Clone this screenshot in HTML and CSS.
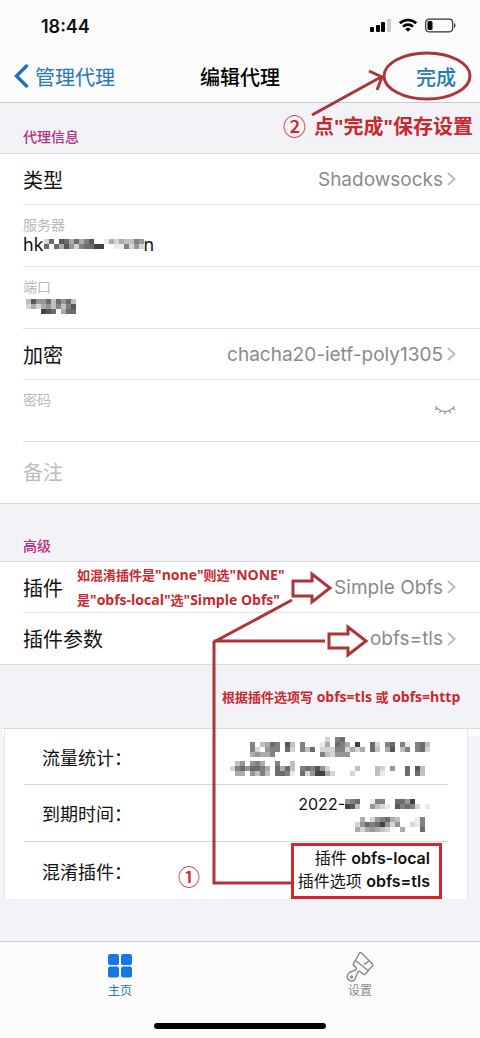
FILE: index.html
```html
<!DOCTYPE html>
<html lang="zh-CN">
<head>
<meta charset="utf-8">
<meta name="viewport" content="width=device-width, initial-scale=1">
<title>编辑代理</title>
<link rel="stylesheet" href="styles.css">
</head>
<body>
<div class="app">
  <header class="top">
    <div class="status">
      <span class="clock">18:44</span>
      <svg class="status-icons" width="86" height="16" viewBox="0 0 86 16" aria-hidden="true">
        <rect x="0" y="9" width="4" height="5" rx="1"/>
        <rect x="6" y="7" width="4" height="7" rx="1"/>
        <rect x="11" y="4" width="4" height="10" rx="1"/>
        <rect x="17" y="1" width="4" height="13" rx="1" fill="#ccc"/>
        <g fill="none" stroke="#000" stroke-width="2.6">
          <path d="M29.800 5.200A12 12 0 0 1 46.200 5.200"/>
          <path d="M33 8.600A7.300 7.300 0 0 1 43 8.600"/>
        </g>
        <path d="M35.200 11A4.200 4.200 0 0 1 40.800 11L38 13.800Z"/>
        <rect x="55.700" y="1.200" width="27" height="12.600" rx="3.500" fill="none" stroke="#333" stroke-width="1.200"/>
        <rect x="57.500" y="3" width="5" height="9" rx="1.500"/>
        <path d="M84 5v5c2-.8 2-4.200 0-5z" fill="#444"/>
      </svg>
    </div>
    <nav class="nav">
      <button class="link back" type="button">
        <svg width="15" height="24" viewBox="0 0 15 24" aria-hidden="true"><path d="M12.500 2L2.500 12l10 10" fill="none" stroke="#2272b9" stroke-width="3.400" stroke-linecap="round"/></svg>
        <span>管理代理</span>
      </button>
      <h1 class="title">编辑代理</h1>
      <button class="link done" type="button">完成</button>
    </nav>
  </header>

  <main class="content">
    <h2 class="section">代理信息</h2>
    <form class="group">
      <button class="row" type="button"><span>类型</span><span class="value">Shadowsocks<svg class="chev" width="9" height="16" viewBox="0 0 9 16"><path d="M1 2l6.500 6L1 14"/></svg></span></button>
      <div class="row field"><span class="hint">服务器</span><span class="entry">hk<svg class="mosaic" data-cells="27.8747468..14243365/7.7485267799..116252"></svg>n</span></div>
      <div class="row field"><span class="hint">端口</span><span class="entry"><svg class="mosaic port" data-cells="3855737573/2424536368/...987.477"></svg></span></div>
      <button class="row" type="button"><span>加密</span><span class="value">chacha20-ietf-poly1305<svg class="chev" width="9" height="16" viewBox="0 0 9 16"><path d="M1 2l6.500 6L1 14"/></svg></span></button>
      <div class="row field secret">
        <label class="hint" for="pw">密码</label>
        <input id="pw" class="input" type="password">
        <button class="eye" type="button" aria-label="显示密码"><svg width="22" height="12" viewBox="0 0 24 12"><path d="M1.500 2Q12 13.500 22.500 2M3.500 4L1 6M7.500 6.500L6 9M12 8v3M16.500 6.500L18 9M20.500 4L23 6" fill="none" stroke="#8a94a6" stroke-width="1.300"/></svg></button>
      </div>
      <div class="row note"><input class="input" type="text" placeholder="备注" aria-label="备注"></div>
    </form>

    <h2 class="section advanced">高级</h2>
    <div class="group">
      <button class="row" type="button"><span>插件</span><span class="value">Simple Obfs<svg class="chev" width="9" height="16" viewBox="0 0 9 16"><path d="M1 2l6.500 6L1 14"/></svg></span></button>
      <button class="row" type="button"><span>插件参数</span><span class="value">obfs=tls<svg class="chev" width="9" height="16" viewBox="0 0 9 16"><path d="M1 2l6.500 6L1 14"/></svg></span></button>
    </div>

    <div class="card-wrap">
      <dl class="card">
        <div class="item"><dt>流量统计：</dt><dd>
          <svg class="mosaic" data-cells="...............2.67................./6.3476.83.6...14.764.9..72.67.61.673/62.566.72.637.222662424.73.48.36.672/45446.........632555................"></svg>
          <svg class="mosaic" data-cells=".35.564..6..3.........................../26757764.7473.676852.....3...32.5..7.83./.44.5363.7761.7259942...2....31....7.73."></svg>
        </dd></div>
        <div class="item"><dt>到期时间：</dt><dd>
          <span class="date">2022-<svg class="mosaic" data-cells="567..166..7759.../983..5321.86762.1"></svg></span>
          <svg class="mosaic" data-cells=".4.256743...16./257679525..216./4245432..4...7."></svg>
        </dd></div>
        <div class="item"><dt>混淆插件：</dt><dd class="boxed"><span>插件 <b>obfs-local</b></span><span>插件选项 <b>obfs=tls</b></span></dd></div>
      </dl>
    </div>
  </main>

  <footer class="tabs">
    <div class="tab-row">
      <a class="tab active" href="#home">
        <svg width="28" height="28" viewBox="0 0 28 28" fill="#1677e5" aria-hidden="true"><rect x="2" y="3" width="11" height="11" rx="2"/><rect x="15" y="3" width="11" height="11" rx="2"/><rect x="2" y="15.500" width="11" height="11" rx="2"/><rect x="15" y="15.500" width="11" height="11" rx="2"/></svg>
        <span>主页</span>
      </a>
      <a class="tab" href="#settings">
        <svg width="28" height="32" viewBox="0 0 28 32" fill="none" stroke="#8b8b8b" stroke-width="1.500" stroke-linejoin="round" stroke-linecap="round" aria-hidden="true"><path d="M13.500 2Q14.500 1 15.500 2L26.500 13Q27 14 26.500 15L22 19.500 9.500 9.500zM9 10L7.500 12.500Q7 13.500 8 14.500L10 16.500Q11 18 9.500 19L3.500 21.500Q.5 23.500 1.500 27 3 30.500 6.500 30 9 29.500 9.500 26.500L12 21Q13 19.500 14.500 21L17 23Q18.500 24 19.500 23L22 20M18.500 13Q21.500 12 22.500 10"/><circle cx="5.500" cy="26" r="1"/></svg>
        <span>设置</span>
      </a>
    </div>
    <div class="home-bar"></div>
  </footer>

  <svg class="notes" width="480" height="1038" viewBox="0 0 480 1038">
    <g class="ink">
      <ellipse cx="427" cy="76" rx="43" ry="23"/>
      <path d="M312 115L381 77M369 71L382 77 377 90"/>
      <path d="M291 883H214V642L292 600M214 641H325"/>
      <path d="M293 581H312V574L330 588 312 602V596H293Z"/>
      <path d="M329 634H348V627L366 641 348 655V648H329Z"/>
    </g>
    <g class="note-text">
      <text class="big" x="314" y="134">点"完成"保存设置</text>
      <text class="num" x="283" y="135">②</text>
      <text class="num one" x="178" y="885">①</text>
      <text x="77" y="580">如混淆插件是<tspan class="latin">"none"</tspan>则选<tspan class="latin">"NONE"</tspan></text>
      <text x="77" y="605">是<tspan class="latin">"obfs-local"</tspan>选<tspan class="latin">"Simple Obfs"</tspan></text>
      <text x="222" y="702">根据插件选项写<tspan class="latin"> obfs=tls </tspan>或<tspan class="latin"> obfs=http</tspan></text>
    </g>
  </svg>
</div>
<script src="mosaic.js"></script>
</body>
</html>
```
FILE: styles.css
```css
* { box-sizing: border-box; }
body {
  margin: 0;
  background: #f2f2f7;
  font-family: Inter, "Noto Sans CJK SC", sans-serif;
  color: #111;
}
button, input {
  font: inherit;
  color: inherit;
  background: none;
  border: 0;
  padding: 0;
  margin: 0;
}
.app {
  position: relative;
  min-height: 100vh;
  display: flex;
  flex-direction: column;
  overflow: hidden;
}
.top {
  background: #fbfbfc;
  border-bottom: 1px solid #c9c9cd;
}
.status {
  height: 50px;
  padding: 2px 24px 0 41px;
  display: flex;
  align-items: center;
  justify-content: space-between;
}
.clock { font-size: 18px; font-weight: 600; }
.nav {
  height: 52px;
  padding: 0 14px;
  display: grid;
  grid-template-columns: 1fr auto 1fr;
  align-items: center;
  font-size: 20px;
}
.title { margin: 0; font-size: 20px; font-weight: 500; color: #000; }
.link { color: #2678b8; }
.back { display: flex; align-items: center; gap: 6px; }
.done { justify-self: end; margin-right: 10px; font-weight: 500; }

.content { flex: 1; }
.section {
  margin: 0;
  height: 50px;
  padding: 24px 23px 0;
  font-size: 14px;
  line-height: 20px;
  font-weight: 500;
  color: #b52f83;
}
.section.advanced { height: 57px; padding-top: 32px; }
.group {
  background: #fff;
  border-top: 1px solid #dcdce0;
  border-bottom: 1px solid #dcdce0;
  padding-left: 23px;
}
.row {
  width: 100%;
  height: 51px;
  padding-right: 24px;
  display: flex;
  align-items: center;
  justify-content: space-between;
  font-size: 20px;
  text-align: left;
  border-bottom: 1px solid #e0e0e2;
}
.row:last-child { border-bottom: 0; }
.value {
  display: flex;
  align-items: center;
  gap: 4px;
  font-size: 19px;
  color: #8a8a8d;
}
.chev { fill: none; stroke: #bcbcc0; stroke-width: 2; }
.field {
  height: 62px;
  padding-top: 11px;
  flex-direction: column;
  align-items: flex-start;
  justify-content: flex-start;
}
.hint { font-size: 14px; line-height: 18px; color: #b9b9bc; }
.entry {
  display: flex;
  align-items: center;
  height: 20px;
  font-size: 18px;
}
.mosaic { display: block; }
.port { margin-left: 3px; }
.secret {
  display: grid;
  grid-template-columns: 1fr auto;
  grid-template-rows: 18px 20px;
}
.secret .input { grid-row: 2; height: 20px; }
.eye { grid-column: 2; grid-row: 1 / 3; align-self: center; line-height: 0; }
.note { height: 61px; }
.input { width: 100%; outline: 0; }
.input::placeholder { color: #bcbcbf; opacity: 1; }

.card-wrap {
  margin: 63px 0 0 2px;
  padding: 0 12px 0 2px;
  border-top: 1px solid #dcdce0;
  background: linear-gradient(#fff 7px, transparent 7px);
}
.card {
  margin: 0;
  padding: 0 19px;
  background: #fff;
  border-left: 1px solid #e8e8ec;
  border-right: 1px solid #e8e8ec;
}
.item {
  height: 57px;
  padding: 0 18px;
  display: flex;
  align-items: center;
  justify-content: space-between;
  border-bottom: 1px solid #d6d6d8;
}
.item:first-child { height: 56px; }
.item:last-child { border-bottom: 0; }
dt { font-size: 18px; }
dd {
  margin: 0;
  display: flex;
  flex-direction: column;
  align-items: flex-end;
  gap: 4px;
  font-size: 16px;
}
.date { display: flex; align-items: center; line-height: 18px; }
.boxed {
  gap: 0;
  line-height: 23px;
  margin-right: -12px;
  padding: 1px 9px 3px 4px;
  border: 3px solid #d8242d;
  white-space: nowrap;
}
.boxed b { font-size: 16px; font-weight: 600; }

.tabs {
  height: 97px;
  background: #fbfbfc;
  border-top: 1px solid #cfcfd2;
  display: flex;
  flex-direction: column;
  align-items: center;
  justify-content: space-between;
  padding: 9px 0;
}
.tab-row { width: 100%; display: flex; }
.tab {
  flex: 1;
  height: 48px;
  display: flex;
  flex-direction: column;
  align-items: center;
  justify-content: space-between;
  text-decoration: none;
  font-size: 12px;
  line-height: 16px;
  color: #8b8b8b;
}
.active { color: #2678a8; }
.home-bar { width: 172px; height: 6px; border-radius: 3px; background: #000; }

.notes {
  position: absolute;
  top: 0;
  right: 0;
  pointer-events: none;
}
.ink { fill: none; stroke: #ad3438; stroke-width: 3; }
.note-text {
  font-family: "Open Sans", "Noto Sans CJK SC", sans-serif;
  font-size: 13px;
  font-weight: 700;
  fill: #c8282f;
}
.latin { font-size: 14px; }
.big { font-size: 20px; }
.num { font-size: 23px; font-weight: 500; font-family: "Noto Sans CJK SC", sans-serif; }
.one { font-size: 22px; }
```
FILE: mosaic.js
```js
// Draws pixelated redactions: each digit is the darkness of one 5px cell.
const CELL = 5;
document.querySelectorAll('.mosaic').forEach((svg) => {
  const rows = svg.dataset.cells.split('/');
  svg.setAttribute('width', Math.max(...rows.map((r) => r.length)) * CELL);
  svg.setAttribute('height', rows.length * CELL);
  rows.forEach((row, y) => {
    [...row].forEach((c, x) => {
      const level = parseInt(c, 10);
      if (!level) return;
      const rect = document.createElementNS('http://www.w3.org/2000/svg', 'rect');
      rect.setAttribute('x', x * CELL);
      rect.setAttribute('y', y * CELL);
      rect.setAttribute('width', CELL);
      rect.setAttribute('height', CELL);
      const shade = 255 - level * 21;
      rect.setAttribute('fill', `rgb(${shade},${shade},${shade})`);
      svg.appendChild(rect);
    });
  });
});
```
